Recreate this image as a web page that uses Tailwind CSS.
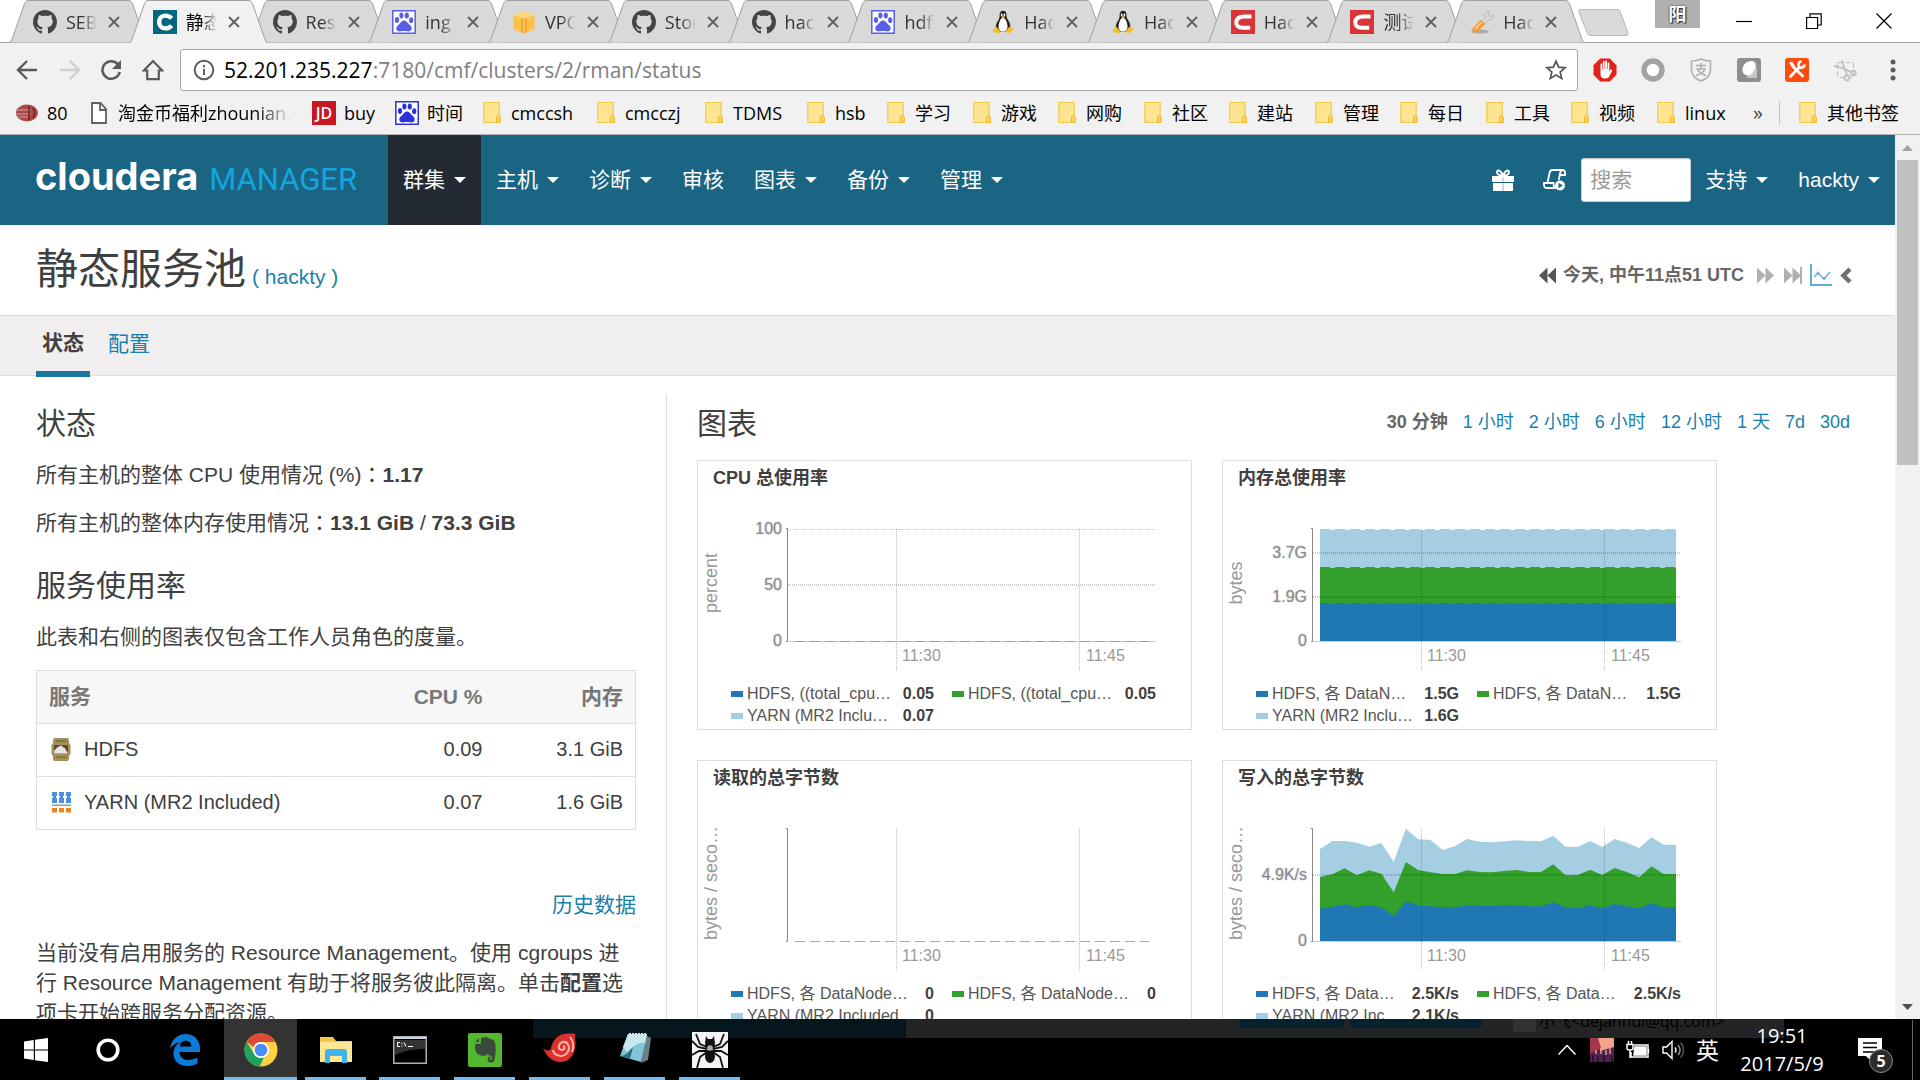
<!DOCTYPE html>
<html lang="zh-CN">
<head>
<meta charset="utf-8">
<title>静态服务池 - Cloudera Manager</title>
<script src="https://cdn.jsdelivr.net/npm/@tailwindcss/browser@4"></script>
</head>
<body class="flex h-screen flex-col overflow-hidden bg-white font-['Liberation_Sans','Noto_Sans_CJK_SC',sans-serif] text-[21px] leading-[30px] text-[#404040]">

<!-- shared symbols -->
<svg class="hidden" aria-hidden="true">
  <symbol id="github" viewBox="0 0 16 16"><path fill="#444" d="M8 0C3.58 0 0 3.58 0 8c0 3.54 2.29 6.53 5.47 7.59.4.07.55-.17.55-.38 0-.19-.01-.82-.01-1.49-2.01.37-2.53-.49-2.69-.94-.09-.23-.48-.94-.82-1.13-.28-.15-.68-.52-.01-.53.63-.01 1.08.58 1.23.82.72 1.21 1.87.87 2.33.66.07-.52.28-.87.51-1.07-1.78-.2-3.64-.89-3.64-3.95 0-.87.31-1.59.82-2.15-.08-.2-.36-1.02.08-2.12 0 0 .67-.21 2.2.82.64-.18 1.32-.27 2-.27s1.36.09 2 .27c1.53-1.04 2.2-.82 2.2-.82.44 1.1.16 1.92.08 2.12.51.56.82 1.27.82 2.15 0 3.07-1.87 3.75-3.65 3.95.29.25.54.73.54 1.48 0 1.07-.01 1.93-.01 2.2 0 .21.15.46.55.38A8.01 8.01 0 0 0 16 8c0-4.42-3.58-8-8-8z"/></symbol>
  <symbol id="cloudera" viewBox="0 0 24 24"><path fill="#00677f" d="M0 0h24v24H0z"/><path fill="none" stroke="#fff" stroke-width="4.4" d="M18.6 8.4C17 6.4 14.800 5.600 12.400 5.600 8.500 5.600 6.200 8.300 6.200 12s2.300 6.400 6.200 6.400c2.400 0 4.600-.8 6.200-2.800"/></symbol>
  <symbol id="csdn" viewBox="0 0 24 24"><path fill="#d93438" d="M0 0h24v24H0z"/><path fill="none" stroke="#fff" stroke-width="4" d="M20.500 6.400h-7C8.500 6.400 5.600 8.500 5.300 12c-.3 3.700 2 5.700 6.500 5.700h7.400"/></symbol>
  <symbol id="baidu" viewBox="0 0 24 24"><path fill="#fff" stroke="currentColor" stroke-width="1.500" d="M.8.8h22.400v22.400H.8z"/><g fill="currentColor"><ellipse cx="5" cy="10" rx="2.100" ry="2.900"/><ellipse cx="9.400" cy="5.600" rx="2.100" ry="3"/><ellipse cx="14.800" cy="5.600" rx="2.100" ry="3"/><ellipse cx="19.200" cy="10.200" rx="2.100" ry="2.900"/><path d="M12 10.500c2 0 3 1.600 4.300 3 1.500 1.600 3.700 2.700 3.400 5.300-.3 2.500-2.400 2.900-4.400 2.500-2.300-.4-4.300-.4-6.600 0-2 .4-4.200-.1-4.400-2.500-.2-2.600 2-3.700 3.400-5.300 1.300-1.400 2.300-3 4.300-3z"/></g></symbol>
  <symbol id="aws" viewBox="0 0 24 24"><path fill="#fbc34a" d="M1.500 5v14L12 23.500V8.500zM22.500 5v14L12 23.500V8.500z"/><path fill="#f3a92c" d="M9 5l3-1.200L15 5v17l-3 1.500L9 22z"/><path fill="#fdd683" d="M1.500 5 12 1l10.500 4L12 9z"/><path stroke="#fff3d8" stroke-width=".6" d="M12 9v14" fill="none"/></symbol>
  <symbol id="tux" viewBox="0 0 24 24"><path fill="#222" d="M12 .8c2.600 0 3.600 1.900 3.500 4.600 0 2.300.9 3.600 2 5.400 1.700 2.800 2.300 5.600 1.500 8.400l-4.500 2.300H9.500l-4.300-2.300c-1-2.500-.2-5.300 1.500-8 1.100-1.800 2-3.200 1.900-5.500C8.500 2.900 9.400.8 12 .8z"/><path fill="#fff" d="M12 8c1.600 0 2.600 1.200 3.400 3.400 1 2.800 2 6-.2 9-1.600 1.400-4.800 1.400-6.400 0-2.200-3-1.200-6.200-.2-9C9.400 9.200 10.400 8 12 8z"/><ellipse cx="10.700" cy="4.900" rx=".9" ry="1.300" fill="#fff"/><ellipse cx="13.400" cy="4.900" rx=".9" ry="1.300" fill="#fff"/><path fill="#f6c01a" d="M10 6.800 12 5.900l2.300.9L12 8.500zM5.200 16.400l3.900 4.900c.6 1.500-.5 2.300-2 2L2.700 22c-1-.6-.2-1.800 0-3zM18.800 16.400l-3.200 3.600v2.500c.6 1.300 1.800 1 2.800.2l3.500-2.300c.8-.7-.6-1.700-.8-3z"/></symbol>
  <symbol id="wrench" viewBox="0 0 24 24"><ellipse cx="10" cy="21.500" rx="9" ry="2" fill="#aaa"/><path fill="#d4d8dc" stroke="#a4a9ae" stroke-width=".6" d="m12 12 3-4c-1-3 .5-6.300 4-7l-.6 4 2 1.500 2.600-1.700c.6 3.500-2 6-5 5.700l-3.500 4z"/><path fill="#f49a2d" d="M10.500 9.800 15 14l-8 8.300c-2 1.300-5.600-1.200-4.300-4z"/><path stroke="#ffd08c" stroke-width="1.800" d="m5 19 6.500-6.500"/></symbol>
  <symbol id="folder" viewBox="0 0 18 24"><path fill="#ffe491" stroke="#f2c94c" stroke-width="1.200" d="M.8 1.500h15.400v14l1 1.500v4.500H.8z"/><path fill="#ffd75e" stroke="#e8b92e" stroke-width="1" d="M13.500 21.500v-5.200c0-1 .6-1.500 1.800-1.500s1.800.5 1.800 1.500v5.200z"/></symbol>
  <symbol id="rewind" viewBox="0 0 18 18"><path fill="currentColor" d="M9 .5v17L0 9zM18 .5v17L9 9z"/></symbol>
</svg>

<header class="shrink-0 border-b border-[#b4b4b4] bg-[#f1f1f1] font-['Open_Sans','Noto_Sans_CJK_SC',sans-serif] text-[18px] leading-6 text-black">
  <!-- tab strip -->
  <div class="flex h-[43px] items-start border-b border-[#a0a0a0] bg-white pl-[9px]">
    <div id="tabs" role="tablist" class="grid w-[1557px] grid-cols-13"></div>
    <button aria-label="新标签页" class="mt-[9px] ml-[11px] h-[27px] w-[52px]"><svg viewBox="0 0 52 27" class="size-full"><path fill="#d9d9d9" stroke="#b9b9b9" d="M4 .5h36c2 0 2.500.5 3 2l8 21c.5 2-.3 3-2 3H14c-2 0-3-.6-3.600-2.500L2 3.500C1.300 1.500 2 .5 4 .5z"/></svg></button>
    <div class="ml-[26px] flex h-7 w-[45px] items-center justify-center bg-[#b0b0b0] text-[18px] font-bold text-white [text-shadow:0_0_2px_#222,1px_1px_1px_#333]">阳</div>
    <div class="ml-auto flex h-[41px] items-center gap-[54px] pr-[28px]">
      <button aria-label="最小化"><svg width="16" height="16" viewBox="0 0 16 16"><path stroke="#000" stroke-width="1.200" d="M0 8.500h16"/></svg></button>
      <button aria-label="还原"><svg width="16" height="16" viewBox="0 0 16 16" fill="none" stroke="#000" stroke-width="1.200"><path d="M.6 4.500h11v11H.6zM4 4.500V.8h11.200v11.200h-3.500"/></svg></button>
      <button aria-label="关闭"><svg width="16" height="16" viewBox="0 0 16 16"><path stroke="#000" stroke-width="1.300" d="m.5.5 15 15M15.500.5l-15 15"/></svg></button>
    </div>
  </div>
  <!-- address bar -->
  <div class="flex h-[53px] items-center pr-[15px] pl-[16px]">
    <button aria-label="后退"><svg width="22" height="22" viewBox="0 0 22 22" fill="none" stroke="#5a5a5a" stroke-width="2.400"><path d="M21 11H2.500M11 2l-9 9 9 9"/></svg></button>
    <button aria-label="前进" class="ml-[21px]"><svg width="22" height="22" viewBox="0 0 22 22" fill="none" stroke="#cfcfcf" stroke-width="2.400"><path d="M1 11h18.500M11 2l9 9-9 9"/></svg></button>
    <button aria-label="重新加载" class="ml-[19px]"><svg width="22" height="22" viewBox="0 0 22 22"><path fill="none" stroke="#5a5a5a" stroke-width="2.500" d="M18.500 6A8.800 8.800 0 1 0 19.800 13"/><path fill="#5a5a5a" d="M21 1v9h-9z"/></svg></button>
    <button aria-label="主页" class="ml-5"><svg width="22" height="22" viewBox="0 0 22 22"><path fill="none" stroke="#5a5a5a" stroke-width="2.200" d="M1.800 11.500 11 2l9.200 9.500h-3.400v8.700H5.200v-8.700z"/></svg></button>
    <div class="ml-[16px] flex h-[42px] flex-1 items-center rounded-[3px] border border-[#a9a9a9] bg-white pr-[10px] pl-3">
      <svg width="22" height="22" viewBox="0 0 22 22" class="shrink-0"><circle cx="11" cy="11" r="9.300" fill="none" stroke="#5f5f5f" stroke-width="2"/><path fill="#5f5f5f" d="M10 9.800h2V16h-2zM10 6h2v2.200h-2z"/></svg>
      <div role="textbox" aria-label="地址" class="ml-[9px] flex-1 text-[21px] text-[#808080]"><span class="text-black">52.201.235.227</span>:7180/cmf/clusters/2/rman/status</div>
      <button aria-label="收藏"><svg width="22" height="22" viewBox="0 0 22 22"><path fill="none" stroke="#5a5a5a" stroke-width="1.800" d="m11 2.200 2.600 6 6.500.6-4.900 4.300 1.500 6.400-5.700-3.400-5.700 3.400 1.500-6.400L1.900 8.800l6.500-.6z"/></svg></button>
    </div>
    <div class="ml-[15px] flex items-center gap-6">
      <svg width="24" height="24" viewBox="0 0 24 24"><path fill="#e2231a" d="M7.200.5h9.600l6.700 6.700v9.600l-6.700 6.700H7.200L.5 16.800V7.200z"/><path fill="#fff" d="M7.500 6.500c0-1.400 1.700-1.400 1.700 0v4.500h.6V4.200c0-1.500 1.800-1.500 1.800 0V11h.6V3.600c0-1.500 1.800-1.500 1.800 0V11h.6V5.600c0-1.400 1.700-1.400 1.700 0v7.700l1-1.300c.9-1 2.200-.3 1.700.9L16.500 18c-1 1.800-2 2.500-4.300 2.500-3.500 0-4.700-1.700-4.700-5z"/></svg>
      <svg width="24" height="24" viewBox="0 0 24 24"><circle cx="12" cy="12" r="9" fill="#fff" stroke="#a3a3a3" stroke-width="5.500"/></svg>
      <svg width="24" height="24" viewBox="0 0 24 24" fill="none" stroke="#b0b0b0"><path stroke-width="1.600" d="M12 1c3 1.500 6 2 9.500 2v8.500c0 5.500-4 9.500-9.500 11.500-5.500-2-9.500-6-9.500-11.500V3C6 3 9 2.500 12 1z"/><path stroke-width="1.700" d="M7 7.500h10M12 5v6M7.500 11h8.500c-1.500 3.500-5 5.500-9 6.500M8.500 11.500c2 3 5 5 8.500 6"/></svg>
      <svg width="24" height="24" viewBox="0 0 24 24"><rect width="24" height="24" rx="3" fill="#8e8e8e"/><path fill="#c4c4c4" d="M9 20h11V9z"/><path fill="#fff" d="M12 3.500c5-1.500 7.500 1 7 5.500-.5 5-3.500 8.500-7.500 8.500S5 15 5.500 11 8 4.500 12 3.500z"/><path fill="#ccc" d="M16 4c4 3 2 9-3 13 5-1 7.500-7 6-11z"/></svg>
      <svg width="24" height="24" viewBox="0 0 24 24"><rect width="24" height="24" rx="3" fill="#fc4c0f"/><path stroke="#fff" stroke-width="2.800" stroke-linecap="round" d="m7.500 8 10 10M5.500 18.500l9-9.500"/><path fill="none" stroke="#fff" stroke-width="2.600" d="M19.500 6.500c0 3-4 4.500-5.500 2s0-5 2.500-5"/><path fill="#fff" d="m4 5 3-1.500 3 4.500-2 2z"/></svg>
      <svg width="24" height="24" viewBox="0 0 24 24" fill="none" stroke="#c0c0c0" stroke-width="1.800"><path stroke-dasharray="5 3" stroke-width="1.200" d="M4.500 4.500h16v15h-16z"/><path d="M9 2c1 5 3 9 5 15M1 8c6 1 11 3 17 6"/><circle cx="14" cy="20" r="2.500"/><circle cx="20.500" cy="15" r="2.300"/></svg>
      <button aria-label="菜单" class="flex w-6 justify-center"><svg width="6" height="22" viewBox="0 0 6 22" fill="#5a5a5a"><circle cx="3" cy="3" r="2.500"/><circle cx="3" cy="11" r="2.500"/><circle cx="3" cy="19" r="2.500"/></svg></button>
    </div>
  </div>
  <!-- bookmarks -->
  <nav aria-label="书签栏" class="flex h-[38px] items-center pb-1 pr-[21px] pl-[15px] whitespace-nowrap">
    <a href="#" class="flex w-[76px] items-center gap-2"><svg width="24" height="20" viewBox="0 0 24 20"><ellipse cx="12" cy="10" rx="11" ry="8.500" fill="#a9494a"/><path stroke="#d9a3a2" stroke-width="1.200" d="M1 7h15M1 11h15M2 14h13"/><path stroke="#7d2125" stroke-width="1.600" fill="none" d="M14 3v14M18 5c2 3 2 7 0 10"/></svg>80</a>
    <a href="#" class="flex w-[221px] items-center gap-[11px]"><svg width="16" height="22" viewBox="0 0 16 22" class="shrink-0" fill="#fff" stroke="#5f5f5f" stroke-width="1.800"><path d="M1 1h8.500L15 7v14H1zM9 1v7h6"/></svg><span class="w-[173px] overflow-hidden [mask-image:linear-gradient(to_right,#000_80%,transparent)]">淘金币福利zhounian.</span></a>
    <a href="#" class="flex w-[83px] items-center gap-2"><span class="flex size-6 items-center justify-center bg-[#c91623] text-[16px] font-semibold text-white">JD</span>buy</a>
    <a href="#" class="flex w-[88px] items-center gap-2"><svg class="size-6 text-[#2a31dd]"><use href="#baidu"/></svg>时间</a>
    <div id="folders" class="flex items-center"></div>
    <button class="ml-auto text-[20px] text-[#444]" aria-label="更多书签">»</button>
    <div class="mr-[19px] ml-[16px] h-6 w-px bg-[#c4c4c4]"></div>
    <a href="#" class="flex items-center gap-[10px]"><svg width="18" height="24"><use href="#folder"/></svg>其他书签</a>
  </nav>
</header>

<div class="flex min-h-0 flex-1">
  <div class="min-w-0 flex-1 overflow-hidden">
    <!-- application navigation -->
    <nav class="flex h-[90px] items-center bg-[#1a6484] pr-[15px] text-white">
      <a href="#" class="flex w-[388px] shrink-0 items-baseline gap-[11px] pb-1 pl-[35px]"><span class="font-['Inter'] text-[38px] font-bold">cloudera</span><span class="font-['Roboto'] text-[31px] text-[#12a5df]">MANAGER</span></a>
      <div class="flex h-full">
        <button class="flex items-center gap-[9px] bg-[#242a33] px-[15px]">群集<svg width="12" height="6"><path fill="#fff" d="M0 0h12L6 6z"/></svg></button>
        <button class="flex items-center gap-[9px] px-[15px]">主机<svg width="12" height="6"><path fill="#fff" d="M0 0h12L6 6z"/></svg></button>
        <button class="flex items-center gap-[9px] px-[15px]">诊断<svg width="12" height="6"><path fill="#fff" d="M0 0h12L6 6z"/></svg></button>
        <button class="flex items-center px-[15px]">审核</button>
        <button class="flex items-center gap-[9px] px-[15px]">图表<svg width="12" height="6"><path fill="#fff" d="M0 0h12L6 6z"/></svg></button>
        <button class="flex items-center gap-[9px] px-[15px]">备份<svg width="12" height="6"><path fill="#fff" d="M0 0h12L6 6z"/></svg></button>
        <button class="flex items-center gap-[9px] px-[15px]">管理<svg width="12" height="6"><path fill="#fff" d="M0 0h12L6 6z"/></svg></button>
      </div>
      <div class="ml-auto flex items-center">
        <button aria-label="新增功能"><svg width="22" height="22" viewBox="0 0 22 22"><path fill="#fff" d="M0 7h22v6H0zM1 14h20v8H1z"/><path stroke="#1a6484" stroke-opacity=".5" d="M11 7v15"/><path fill="none" stroke="#fff" stroke-width="1.800" d="M11 7C9 1 4.500 0 5 3.500 5.300 5.500 8 6.500 11 7c3-.5 5.700-1.500 6-3.500C17.500 0 13 1 11 7z"/></svg></button>
        <button aria-label="运行的命令" class="ml-[29px]"><svg width="23" height="22" viewBox="0 0 23 22" fill="none" stroke="#fff" stroke-width="1.800"><path d="M4.500 14 6.500 4c.4-2 1.500-3 3-3H20c-2 0-2.600 1-2.900 3l-1.300 7M20 1c2 .3 2.500 2 2 5h-5M12 19H3.500C1.500 19 .8 17.500 1 14h9.500c0 3 .5 5 2.500 5"/><circle cx="17" cy="16.500" r="5" fill="#fff" stroke="none"/><path fill="#1a6484" stroke="none" d="M15.500 13.800v5.400l4.300-2.700z"/></svg></button>
        <input type="text" aria-label="搜索" placeholder="搜索" class="ml-[15px] h-11 w-[110px] rounded-[3px] border border-[#ccc] bg-white px-2 text-[21px] text-[#404040] shadow-[inset_0_1px_1px_rgba(0,0,0,0.08)] placeholder:text-[#999]">
        <button class="ml-[14px] flex items-center gap-[9px]">支持<svg width="12" height="6"><path fill="#fff" d="M0 0h12L6 6z"/></svg></button>
        <button class="ml-[30px] flex items-center gap-[9px]">hackty<svg width="12" height="6"><path fill="#fff" d="M0 0h12L6 6z"/></svg></button>
      </div>
    </nav>

    <!-- page title -->
    <div class="flex h-[91px] items-center justify-between border-b border-[#ddd] pr-[43px] pl-9">
      <h1 class="flex items-baseline gap-[6px] pt-[7px] text-[42px] leading-[60px]">静态服务池<a href="#" class="text-[21px] text-[#1a7fab]">( hackty )</a></h1>
      <div class="mt-[10px] flex items-center text-[18px] font-bold text-[#666]">
        <button aria-label="向后"><svg class="size-[17px] text-[#555]"><use href="#rewind"/></svg></button>
        <span class="ml-[7px]">今天, 中午11点51 UTC</span>
        <button aria-label="向前" class="ml-[13px]"><svg class="size-[17px] rotate-180 text-[#b0b0b0]"><use href="#rewind"/></svg></button>
        <button aria-label="当前" class="ml-[10px] flex items-center"><svg class="size-[17px] rotate-180 text-[#b0b0b0]"><use href="#rewind"/></svg><span class="-ml-px h-[17px] w-[2px] bg-[#b0b0b0]"></span></button>
        <button aria-label="图表" class="ml-[8px]"><svg width="22" height="22" viewBox="0 0 22 22" fill="none" stroke="#5fb0d2"><path stroke-width="2" d="M1 0v21h21"/><path stroke-width="1.500" d="m4 13 4-4 6 6 6-7"/><circle cx="8" cy="9" r="1"/><circle cx="14" cy="14.500" r="1"/></svg></button>
        <button aria-label="收起" class="ml-[8px]"><svg width="12" height="17" viewBox="0 0 12 17"><path fill="none" stroke="#707070" stroke-width="4.500" d="M10 2 3.500 8.500 10 15"/></svg></button>
      </div>
    </div>

    <div class="flex h-[60px] items-end border-b border-[#ddd] bg-[#f0eeef] pl-9">
      <a href="#" class="-mb-[2px] flex h-[49px] w-[54px] justify-center border-b-[6px] border-[#1c76a0] font-bold">状态</a>
      <a href="#" class="ml-[18px] h-[46px] text-[#1a7fab]">配置</a>
    </div>

    <main class="flex items-stretch pt-[18px] pr-[45px] pl-9">
      <!-- status column -->
      <section class="h-[720px] w-[631px] shrink-0 border-r border-[#ddd] pr-[30px]">
        <h2 class="pt-[10px] text-[30px] leading-10">状态</h2>
        <p class="mt-[16px]">所有主机的整体 CPU 使用情况 (%)<span lang="zh-TW" class="font-['Noto_Sans_CJK_TC',sans-serif] leading-none">：</span><b>1.17</b></p>
        <p class="mt-[18px]">所有主机的整体内存使用情况<span lang="zh-TW" class="font-['Noto_Sans_CJK_TC',sans-serif] leading-none">：</span><b>13.1 GiB</b> / <b>73.3 GiB</b></p>
        <h2 class="mt-[28px] text-[30px] leading-10">服务使用率</h2>
        <p class="mt-[16px]">此表和右侧的图表仅包含工作人员角色的度量。</p>
        <table class="mt-[18px] w-full border border-[#ddd] text-left">
          <thead><tr class="h-[53px] bg-[#f7f7f7] text-[#777]"><th class="pl-3">服务</th><th class="text-right">CPU %</th><th class="w-[153px] pr-3 text-right">内存</th></tr></thead>
          <tbody class="text-[20px]">
            <tr class="h-[53px] border-t border-[#ddd]">
              <td class="pb-[2px] pl-3"><a href="#" class="flex items-center gap-[11px]"><svg width="24" height="24" viewBox="0 0 24 24"><path fill="#a3905c" d="M5 1h14l1 2v3l1.500 2v9L20 19v3l-1 2H5l-1-2v-3l-1.500-2V8L4 6V3z"/><path fill="#5d4f2b" d="M5 8h14v8.500H5z"/><path fill="#e6e6e6" d="M5 15c1-3 3-4 4-5l3-1.500 4 3 3 5H5z"/><path stroke="#6e5d33" d="M7 4h10M7 20h10"/></svg>HDFS</a></td>
              <td class="pb-[2px] text-right">0.09</td><td class="pr-3 pb-[2px] text-right">3.1 GiB</td>
            </tr>
            <tr class="h-[53px] border-t border-[#ddd]">
              <td class="pb-[2px] pl-3"><a href="#" class="flex items-center gap-[11px]"><svg width="24" height="24" viewBox="0 0 24 24"><path fill="#4c8fe0" d="M3 2h5v4H7v2h1v5H3V8h1V6H3zM10 2h5v4h-1v2h1v5h-5V8h1V6h-1zM17 2h5v4h-1v2h1v5h-5V8h1V6h-1z"/><path fill="#999" d="M3 14.500h19v1.500H3z"/><path fill="#f0831e" d="M3 18h5v4.500H3zM10 18h5v4.500h-5zM17 18h5v4.500h-5z"/></svg>YARN (MR2 Included)</a></td>
              <td class="pb-[2px] text-right">0.07</td><td class="pr-3 pb-[2px] text-right">1.6 GiB</td>
            </tr>
          </tbody>
        </table>
        <p class="mt-[60px] text-right"><a href="#" class="text-[#1a7fab]">历史数据</a></p>
        <p class="mt-[18px]">当前没有启用服务的 Resource Management。使用 cgroups 进行 Resource Management 有助于将服务彼此隔离。单击<b>配置</b>选项卡开始跨服务分配资源。</p>
      </section>

      <!-- charts column -->
      <section class="min-w-0 flex-1 pl-[30px]">
        <div class="flex items-center justify-between pt-[10px]">
          <h2 class="text-[30px] leading-10">图表</h2>
          <div class="flex gap-[15px] pb-[5px] text-[18px] text-[#1a7fab]">
            <b class="text-[#666]">30 分钟</b><a href="#">1 小时</a><a href="#">2 小时</a><a href="#">6 小时</a><a href="#">12 小时</a><a href="#">1 天</a><a href="#">7d</a><a href="#">30d</a>
          </div>
        </div>
        <div id="charts" class="mt-4 flex flex-wrap gap-[30px]"></div>
      </section>
    </main>
  </div>

  <!-- window scrollbar -->
  <div class="flex w-[25px] shrink-0 flex-col items-center bg-[#f1f1f1]">
    <div class="flex h-[25px] items-center"><svg width="11" height="6"><path fill="#a3a3a3" d="M0 6h11L5.500 0z"/></svg></div>
    <div class="h-[305px] w-[21px] bg-[#c1c1c1]"></div>
    <div class="mt-auto flex h-[25px] items-center"><svg width="11" height="6"><path fill="#505050" d="M0 0h11L5.500 6z"/></svg></div>
  </div>
</div>

<!-- taskbar -->
<footer class="relative h-[61px] shrink-0 bg-black font-['Open_Sans','Noto_Sans_CJK_SC',sans-serif] text-white">
  <!-- window showing through behind the bar -->
  <div class="absolute top-0 left-[533px] flex h-[19px] w-[1251px] overflow-hidden" aria-hidden="true">
    <div class="w-[373px] bg-[#06161d]"></div>
    <div class="flex flex-1 bg-[#232425] pl-[333px]">
      <div class="h-[9px] w-[105px] rounded-b bg-[#06222f]"></div>
      <div class="ml-[6px] h-[9px] w-[132px] rounded-b bg-[#06222f]"></div>
      <div class="ml-[31px] h-[13px] w-[23px] bg-[#323232]"></div>
      <div class="-mt-[10px] ml-[3px] text-[16px] leading-6 text-black">小飞&lt;dejanhui@qq.com&gt;</div>
    </div>
  </div>
  <div class="relative flex h-full items-stretch">
    <button aria-label="开始" class="flex w-[72px] items-center justify-center"><svg width="24" height="24" viewBox="0 0 24 24" fill="#fff"><path d="M0 3.400 9.800 2v9.500H0zM11 1.800 24 0v11.500H11zM0 12.600h9.800V22L0 20.600zM11 12.600h13V24l-13-1.800z"/></svg></button>
    <button aria-label="Cortana" class="flex w-[72px] items-center justify-center"><svg width="24" height="24" viewBox="0 0 24 24"><circle cx="12" cy="12" r="9.800" fill="none" stroke="#fff" stroke-width="3.600"/></svg></button>
    <button aria-label="Edge" class="flex w-[80px] items-center justify-center pl-[2px]"><svg width="30" height="32" viewBox="0 0 30 32"><path fill="#0b7ad8" d="M0 14.500C1.500 5.500 7.500 0 15.500 0 24 0 30 6 30 14.500V18H9.500c.3 5.500 4 8 9 8 3.500 0 6.500-1 9-2.500v6C25 31 21.500 32 17.500 32 9 32 3.500 27 3.500 19.500c0-5.500 3-9.500 7.500-11.500C6.500 8.500 3 10.500 0 14.500zM9.800 12.500h11.500c0-3.500-2-5.700-5.500-5.700s-5.500 2.400-6 5.700z"/></svg></button>
    <button aria-label="Chrome" class="flex w-[73px] items-center justify-center border-b-[3px] border-[#76b9ed] bg-[#333] pt-[3px]"><svg width="34" height="34" viewBox="0 0 34 34"><circle cx="17" cy="17" r="16.500" fill="#ffcf44"/><path fill="#df4b37" d="M2.700 8.800A16.500 16.500 0 0 1 31.500 9H17a8 8 0 0 0-7.500 5z"/><path fill="#1ca261" d="M2.700 8.800 10 21a8 8 0 0 0 10 3.500L15.500 33.400A16.500 16.500 0 0 1 2.700 8.800z"/><circle cx="17" cy="17" r="8" fill="#fff"/><circle cx="17" cy="17" r="6.300" fill="#4c8bf5"/></svg></button>
    <button aria-label="文件资源管理器" class="mr-[7px] ml-2 flex w-[61px] items-center justify-center border-b-[3px] border-[#76b9ed] pt-[3px]"><svg width="32" height="28" viewBox="0 0 32 28"><path fill="#f3c94d" d="M0 1h13l3 4h16v21H0z"/><path fill="#ffe694" d="M0 6h32v20H0z"/><path fill="#3fb4ea" d="M5 27V16c0-2 1-3 3-3h16c2 0 3 1 3 3v11h-5v-7H10v7z"/></svg></button>
    <button aria-label="命令提示符" class="mr-[7px] ml-[6px] flex w-[61px] items-center justify-center border-b-[3px] border-[#76b9ed] pt-[3px]"><svg width="34" height="28" viewBox="0 0 34 28"><path fill="#000" stroke="#a9b4ba" stroke-width="1.500" d="M.8.8h32.400v26.400H.8z"/><path fill="#c8d2d8" d="M1 1h32v2H1z"/><path fill="#333" d="M2 4h30v9C20 13 10 15 2 19z"/><path stroke="#fff" d="M7 6.500H4.500v4H7M9 7v1M9 9.500v1M11 6.500l2 4M15 10.500h5" fill="none"/></svg></button>
    <button aria-label="印象笔记" class="mx-[7px] flex w-[61px] items-center justify-center border-b-[3px] border-[#76b9ed] pt-[3px]"><svg width="34" height="34" viewBox="0 0 34 34"><rect width="34" height="34" rx="2" fill="#54b82f"/><path fill="#3c4a3c" d="M13 5c3-1 7-1 9 1 4 .5 5 1.500 5.500 6 .5 6 0 12-1.500 16-1 2-5 2-6 0-1-2 0-5 2.500-4.500v1.800c-1.500 0-1.500 1.500 0 1.500 1.800 0 1.500-2.500 1-4-2 0-3.500-.5-4-2-.5 2-2 2-4.500 2-4 0-7-2-8-7-.3-2 0-3.500.5-5h4c1 0 1.500-.5 1.500-1.500zM11 5v4H7zM21.500 14.500c1-1.500 3-1 3 .7z"/></svg></button>
    <button aria-label="螺旋" class="mx-[7px] flex w-[61px] items-center justify-center border-b-[3px] border-[#76b9ed]"><svg width="34" height="30" viewBox="0 0 34 30"><path fill="#dc2f2f" d="M0 15c3 3 6 3 8 1C9 8 14 2 21 1c6-1 10 0 12 0-2 2-1 4-.5 8C33 19 28 29 18 29 8 29 3 22 0 15z"/><path fill="none" stroke="#ffb5a8" stroke-width="2" d="M10 17c1 6 10 8 14 3s1-12-4-11-6 8-1 8c3 0 3-4 1-4M27 4c4 5 4 10 2 15"/></svg></button>
    <button aria-label="记事本" class="mx-[7px] flex w-[61px] items-center justify-center border-b-[3px] border-[#76b9ed]"><svg width="32" height="32" viewBox="0 0 32 32"><path fill="#6d7f83" d="m26 3 6 3-3 22-7 3z"/><path fill="#7fc6d6" d="M9 2h19l-6 28L1 24z"/><path fill="#c7e8ef" d="M9 2h19l-2 9c-7-1-12 4-18 9L4 15z"/><path fill="#2b6f86" d="M1 24c5 0 8-3 13-9l-3 12z"/><path stroke="#ddd" stroke-width="2" stroke-dasharray="2 1" d="M10 2h18"/></svg></button>
    <button aria-label="蜘蛛" class="mx-[7px] flex w-[61px] items-center justify-center border-b-[3px] border-[#76b9ed] pt-[3px]"><svg width="36" height="36" viewBox="0 0 36 36"><path fill="#f4f4f4" d="M0 0h36v36H0z"/><g fill="none" stroke="#111" stroke-width="1.800"><path d="M15 15 8 12 4 2M21 15l7-3 4-10M15 17 6 15 0 9M21 17l9-2 6-6M15 19l-8 0-7 4M21 19l8 0 7 4M15 20 8 25 5 36M21 20l7 5 3 11"/></g><ellipse cx="18" cy="24" rx="5" ry="7" fill="#111"/><circle cx="18" cy="13" r="5" fill="#111"/><path fill="#111" d="m14 4 2 3h4l2-3 1 7H13z"/><circle cx="18" cy="16" r="2.800" fill="#aaa"/></svg></button>

    <div class="ml-auto flex items-center">
      <button aria-label="显示隐藏的图标"><svg width="18" height="10" viewBox="0 0 18 10"><path fill="none" stroke="#fff" stroke-width="1.500" d="m.5 9.500 8.500-9 8.500 9"/></svg></button>
      <svg width="24" height="24" viewBox="0 0 24 24" class="ml-[14px]"><path fill="#50224c" d="M0 0h24v24H0z"/><path fill="#f0a58a" d="M8 0h16v9L10 13z"/><path fill="#a3354d" d="M0 0h8l3 10-11 6z"/><path stroke="#e0a08a" stroke-width="1.500" d="M6 12v4M11 10v6M16 12v5M20 10v6"/><path stroke="#1d1030" stroke-width="1.500" d="M3 17v7M8 18v6M14 17v7M22 18v6"/></svg>
      <svg width="24" height="18" viewBox="0 0 24 18" class="ml-[12px]" fill="none" stroke="#fff" stroke-width="1.500"><path d="M8 4h14v12H5v-5M22.500 8v4"/><path fill="#fff" d="M9 6h11v8H8z"/><path d="M1 3.500h6v4c0 2-6 2-6 0zM2.500 3V0M5.500 3V0M4 9v8"/></svg>
      <svg width="22" height="20" viewBox="0 0 22 20" class="ml-[12px]" fill="none" stroke="#fff" stroke-width="1.400"><path d="M1 7h3.500L10 1.500v17L4.500 13H1zM13 7.500c1.200 1.500 1.200 3.500 0 5"/><path stroke="#999" d="M16 5c2.500 3 2.500 7 0 10"/><path stroke="#555" d="M18.500 2.500c4 4.500 4 10.500 0 15"/></svg>
      <span class="ml-[12px] text-[23px]">英</span>
      <time datetime="2017-05-09T19:51" class="ml-[12px] w-[102px] text-center text-[20px] leading-7">19:51<br>2017/5/9</time>
      <button aria-label="通知" class="relative ml-[25px] size-9"><svg width="24" height="24" viewBox="0 0 24 24"><path fill="#fff" d="M0 0h24v18H14v6l-6-6H0z"/><path stroke="#000" stroke-width="1.500" d="M5 5h14M5 9.500h14M5 14h14"/></svg><span class="absolute top-[17px] left-[11px] flex size-6 items-center justify-center rounded-full border border-[#888] bg-[#2b2b2b] text-[16px] font-bold">5</span></button>
      <div class="mr-[7px] ml-[18px] h-[60px] w-px bg-[#666]"></div>
    </div>
  </div>
</footer>

<script>
const tabs = [['github','SEBP'],['cloudera','静态服'],['github','Reso'],['baidu','ing s'],['aws','VPC'],['github','Stor'],['github','hack'],['baidu','hdfs'],['tux','Hado'],['tux','Hado'],['csdn','Hado'],['csdn','测试'],['wrench','Hado']];
document.getElementById('tabs').innerHTML = tabs.map(([icon, name], i) => {
  const on = i === 1;
  return `<div role="tab" aria-selected="${on}" class="relative h-[43px] ${on ? 'z-10' : ''}">
    <svg width="139" height="43" class="absolute top-0 left-0" viewBox="0 0 139 43"><path fill="${on ? '#f1f1f1' : '#d9d9d9'}" stroke="#a0a0a0" d="M0 ${on ? 44 : 42.5}C2 42 2.500 41 3.500 38L15 5c1.500-3.500 2-4.500 5-4.500h99c3 0 3.500 1 5 4.500l11.500 33c1 3 1.500 4 3.500 ${on ? 6 : 4.5}"/></svg>
    <div class="relative flex h-[43px] items-center pl-6"><svg class="size-6 shrink-0 text-[#5a5fe8]"><use href="#${icon}"/></svg>
    <span class="ml-[9px] w-[31px] shrink-0 overflow-hidden whitespace-nowrap [mask-image:linear-gradient(to_right,#000_50%,transparent)] ${on ? 'text-black' : 'text-[#333]'}">${name}</span>
    <button aria-label="关闭标签页" class="ml-[11px] shrink-0"><svg width="12" height="12" viewBox="0 0 12 12"><path stroke="#5f5f5f" stroke-width="1.800" d="m1 1 10 10M11 1 1 11"/></svg></button></div></div>`;
}).join('');

const folders = [['cmccsh','w-[114px]'],['cmcczj','w-[108px]'],['TDMS','w-[102px]'],['hsb','w-[80px]'],['学习','w-[86px]'],['游戏','w-[85px]'],['网购','w-[86px]'],['社区','w-[85px]'],['建站','w-[86px]'],['管理','w-[85px]'],['每日','w-[86px]'],['工具','w-[85px]'],['视频','w-[86px]'],['linux','w-[80px]']];
document.getElementById('folders').innerHTML = folders.map(([n, w]) =>
  `<a href="#" class="flex ${w} items-center gap-[10px]"><svg width="18" height="24"><use href="#folder"/></svg>${n}</a>`).join('');

// Stacked area values are y positions in the plot, from the top layer down.
const flat = y => Array(30).fill(y);
const px = a => a.map(v => v / 3 - 55);
const charts = [
  { title:'CPU 总使用率', unit:'percent', ticks:[['100',34],['50',90],['0',146]], dash:'#7aabc0',
    legend:[['HDFS, ((total_cpu…','0.05'],['HDFS, ((total_cpu…','0.05'],['YARN (MR2 Inclu…','0.07']] },
  { title:'内存总使用率', unit:'bytes', ticks:[['3.7G',58],['1.9G',102],['0',146]],
    layers:[flat(35),flat(73),flat(109)], edge:true,
    legend:[['HDFS, 各 DataN…','1.5G'],['HDFS, 各 DataN…','1.5G'],['YARN (MR2 Inclu…','1.6G']] },
  { title:'读取的总字节数', unit:'bytes / seco…', ticks:[], dash:'#78c0b4',
    legend:[['HDFS, 各 DataNode…','0'],['HDFS, 各 DataNode…','0'],['YARN (MR2 Included…','0']] },
  { title:'写入的总字节数', unit:'bytes / seco…', ticks:[['4.9K/s',80],['0',146]],
    layers:[
      px([327,303,303,308,320,309,365,266,298,300,330,318,297,305,307,304,301,303,304,287,320,321,303,320,297,308,324,292,314,314]),
      px([411,403,385,406,391,401,457,366,390,397,402,402,391,396,397,393,390,396,396,373,406,405,389,405,384,396,412,379,402,402]),
      px([506,500,493,502,495,502,528,484,496,499,501,502,495,498,498,495,496,499,499,487,502,505,496,505,492,499,505,490,502,502])],
    legend:[['HDFS, 各 Data…','2.5K/s'],['HDFS, 各 Data…','2.5K/s'],['YARN (MR2 Inc…','2.1K/s']] },
];
const fills = ['#a6cee3','#33a02c','#1f78b4'];
// The base line is solid, the top line thin, the ones between are two pixels thick.
const grid = y => y === 146 ? `<path stroke="#000" stroke-opacity=".2" d="M90 146.500H458"/>`
  : y === 34 ? `<path stroke="#000" stroke-opacity=".2" stroke-dasharray="1 1" d="M90 34.500H458"/>`
  : `<path stroke="#000" stroke-opacity=".2" stroke-width="2" stroke-dasharray="1 1" d="M90 ${y}H458"/>`;
document.getElementById('charts').innerHTML = charts.map(c => {
  const areas = (c.layers || []).map((ys, k) => {
    const pts = ys.map((y, i) => `${(97 + i * 356 / 29).toFixed(1)},${y.toFixed(1)}`).join(' ');
    return `<polygon fill="${fills[k]}" points="97,146 ${pts} 453,146"/>` +
      (c.edge ? `<path stroke="${fills[k]}" stroke-width="1" stroke-dasharray="10 5" d="M97 ${ys[0] - .5}H453"/>` : '');
  }).join('');
  const ticks = c.ticks.map(([t, y]) => `${grid(y)}
     <text x="84" y="${y + 5}" text-anchor="end" class="fill-[#888] text-[16px] [text-shadow:0_0_2px_#bbb]">${t}</text>`).join('');
  return `<article class="h-[270px] w-[495px] border border-[#ddd]">
    <h3 class="h-[34px] pl-[15px] text-[18px] leading-[35px] font-bold">${c.title}</h3>
    <svg width="493" height="188" viewBox="0 0 493 188" role="img" aria-label="${c.title}">
      ${areas}${ticks}
      <path fill="none" stroke="#888" d="M88 33.500h1.500v113H88"/>
      <path stroke="#000" stroke-opacity=".25" stroke-dasharray="1 1" d="M198.500 34v142M381.500 34v142"/>
      ${c.dash ? `<path stroke="${c.dash}" stroke-dasharray="10 5" d="M97 146.500H451"/>` : ''}
      <text x="204" y="166" class="fill-[#999] text-[16px]">11:30</text><text x="388" y="166" class="fill-[#999] text-[16px]">11:45</text>
      <text transform="translate(19 88) rotate(-90)" text-anchor="middle" class="fill-[#999] text-[18px]">${c.unit}</text>
    </svg>
    <ul class="grid grid-cols-[203px_204px] gap-x-[18px] pl-[33px] text-[16px] leading-[22px] text-[#555]">${c.legend.map(([n, v], i) =>
      `<li class="flex items-center"><i class="h-[6px] w-3 ${['bg-[#1f78b4]','bg-[#33a02c]','bg-[#a6cee3]'][i]}"></i><span class="ml-1 whitespace-nowrap">${n}</span><b class="ml-auto text-[#404040]">${v}</b></li>`).join('')}</ul>
  </article>`;
}).join('');
</script>
</body>
</html>
